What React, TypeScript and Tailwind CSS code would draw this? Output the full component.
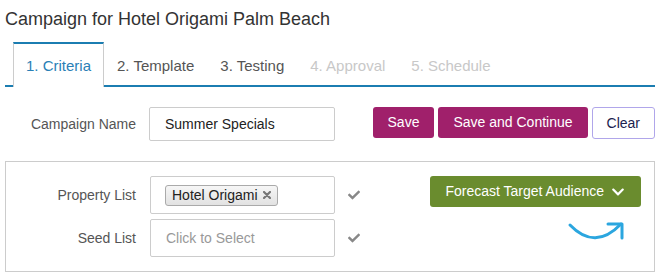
import React from 'react';
import { FaCheck, FaChevronDown } from 'react-icons/fa';

type TabState = 'active' | 'normal' | 'disabled';

const tabs: { label: string; state: TabState }[] = [
  { label: '1. Criteria', state: 'active' },
  { label: '2. Template', state: 'normal' },
  { label: '3. Testing', state: 'normal' },
  { label: '4. Approval', state: 'disabled' },
  { label: '5. Schedule', state: 'disabled' },
];

const CurvedArrow = () => (
  <svg width="60" height="24" viewBox="0 0 60 24" className="mr-[15px] mt-[13px]">
    <path d="M4 5 Q29 31 55 4" fill="none" stroke="#2ba6df" strokeWidth="3" strokeLinecap="round" />
    <path d="M42 4 H56 V18" fill="none" stroke="#2ba6df" strokeWidth="3" strokeLinecap="round" strokeLinejoin="round" />
  </svg>
);

const App: React.FC = () => {
  return (
    <div className="w-[660px] h-[275px] overflow-hidden bg-white font-['Liberation_Sans',Arial,sans-serif]">
      {/* Header */}
      <h1 className="pl-[5px] pt-[9px] text-[18px] leading-[20px] text-[#333]">
        Campaign for Hotel Origami Palm Beach
      </h1>

      {/* Step tabs */}
      <ul className="mx-[5px] mt-[13px] flex items-start border-b-2 border-[#1b7db1] px-[8px]">
        {tabs.map((tab) => (
          <li
            key={tab.label}
            className={`-mb-[2px] flex h-[45px] items-center border-x border-t-2 px-[12px] pt-[1px] text-[15px] ${
              tab.state === 'active'
                ? 'border-x-[#cccccc] border-t-[#1b7db1] bg-white text-[#2a80b6]'
                : tab.state === 'normal'
                ? 'border-transparent text-[#555]'
                : 'border-transparent text-[#c8c8c8]'
            }`}
          >
            {tab.label}
          </li>
        ))}
      </ul>

      {/* Campaign name row */}
      <div className="mx-[5px] mt-[20px] flex items-start">
        <div className="flex h-[34px] w-[131px] items-center justify-end text-[14px] text-[#555]">
          Campaign Name
        </div>
        <input
          readOnly
          defaultValue="Summer Specials"
          className="ml-[13px] h-[34px] w-[186px] rounded-[2px] border border-[#cccccc] px-[15px] text-[14px] text-[#222] outline-none"
        />
        <div className="ml-auto flex gap-[4px]">
          <button className="h-[31px] rounded-[3px] bg-[#a0206b] px-[15px] text-[14px] text-white">Save</button>
          <button className="h-[31px] rounded-[3px] bg-[#a0206b] px-[15px] text-[14px] text-white">
            Save and Continue
          </button>
          <button className="h-[32px] rounded-[3px] border border-[#b0a6ea] bg-white px-[14px] text-[14px] text-[#1b2250]">
            Clear
          </button>
        </div>
      </div>

      {/* Criteria panel */}
      <div className="mx-[5px] mt-[20px] flex border border-[#cccccc] py-[14px]">
        <div className="flex flex-col gap-[5px]">
          <div className="flex items-center">
            <div className="w-[130px] text-right text-[14px] text-[#555]">Property List</div>
            <div className="ml-[14px] flex h-[38px] w-[185px] items-center rounded-[2px] border border-[#cccccc] px-[14px]">
              <span className="flex h-[21px] items-center gap-[5px] rounded-[3px] border border-[#aaaaaa] bg-gradient-to-b from-[#f6f6f6] to-[#e2e2e2] px-[6px] text-[14px] text-[#222]">
                Hotel Origami
                <svg width="8" height="8" viewBox="0 0 8 8">
                  <path d="M1 1 L7 7 M7 1 L1 7" stroke="#777" strokeWidth="2.2" strokeLinecap="round" />
                </svg>
              </span>
            </div>
            <FaCheck size={12} color="#888" className="ml-[13px]" />
          </div>
          <div className="flex items-center">
            <div className="w-[130px] text-right text-[14px] text-[#555]">Seed List</div>
            <div className="ml-[14px] flex h-[38px] w-[185px] items-center rounded-[2px] border border-[#cccccc] px-[15px] text-[14px] text-[#999]">
              Click to Select
            </div>
            <FaCheck size={12} color="#888" className="ml-[13px]" />
          </div>
        </div>

        <div className="ml-auto flex flex-col items-end pr-[13px]">
          <button className="flex h-[31px] items-center gap-[7px] rounded-[3px] bg-[#6a8c2e] pl-[15px] pr-[16px] text-[14px] text-white">
            Forecast Target Audience
            <FaChevronDown size={14} />
          </button>
          <CurvedArrow />
        </div>
      </div>
    </div>
  );
};

export default App;
